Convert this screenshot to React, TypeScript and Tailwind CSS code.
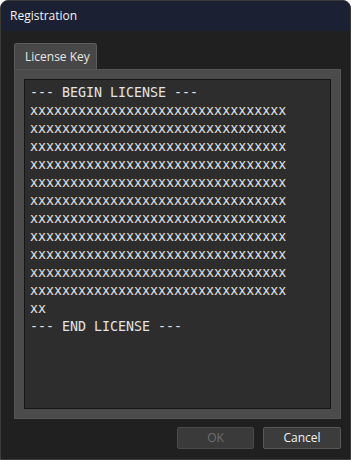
import React from "react";

const LICENSE_LINES = [
  "--- BEGIN LICENSE ---",
  ...Array.from({ length: 11 }, () => "x".repeat(32)),
  "xx",
  "--- END LICENSE ---",
];

export default function App() {
  return (
    <div
      className="w-[351px] h-[460px] bg-[#202020] rounded-t-[8px] border border-[#3a3a3a] overflow-hidden flex flex-col"
      style={{ fontFamily: '"Open Sans", "Noto Sans", sans-serif' }}
    >
      {/* title bar */}
      <div className="h-[30px] shrink-0 bg-[#1c2033] flex items-center pl-[9px] text-[12px] text-[#f2f2f2]">
        Registration
      </div>

      <div className="flex-1 flex flex-col pl-[13px] pr-[9px] pt-[12px]">
        {/* tab header */}
        <div className="flex">
          <div className="h-[26px] w-[83px] bg-[#474747] border border-b-0 border-[#5c5c5c] rounded-t-[3px] flex items-center pl-[10px] text-[12px] text-[#e6e6e6]">
            License Key
          </div>
        </div>

        {/* tab panel */}
        <div className="h-[350px] bg-[#4b4b4b] border border-[#555] p-[9px] flex">
          <div
            className="flex-1 bg-[#2d2d2d] border border-[#161616] pl-[5px] pt-[4px] text-[13.3px] leading-[18px] text-[#e4e4e4] whitespace-pre"
            style={{ fontFamily: '"DejaVu Sans Mono", "Liberation Mono", monospace' }}
          >
            {LICENSE_LINES.map((line, i) => (
              <div key={i}>{line}</div>
            ))}
          </div>
        </div>

        {/* buttons */}
        <div className="flex justify-end gap-[9px] mt-[8px]">
          <button
            disabled
            className="w-[77px] h-[22px] bg-[#3a3a3a] border border-[#4a4a4a] rounded-[2px] text-[12px] text-[#6e6e6e]"
          >
            OK
          </button>
          <button className="w-[78px] h-[22px] bg-[#3c3c3c] border border-[#595959] rounded-[2px] text-[12px] text-[#f0f0f0]">
            Cancel
          </button>
        </div>
      </div>
    </div>
  );
}
